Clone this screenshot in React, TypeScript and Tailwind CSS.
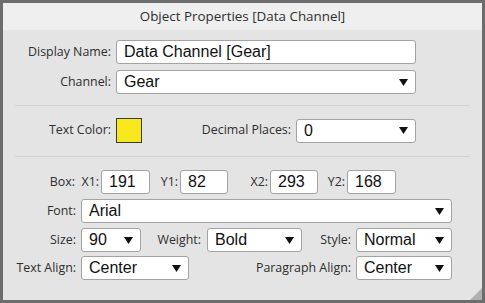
import React from "react";

const labelCls = "text-[12.4px] text-[#2e2e2e] text-right whitespace-nowrap shrink-0";
const fieldBase =
  "h-[24px] bg-white border border-[#a3a3a3] rounded-[3px] flex items-center pl-[7px] text-[16px] text-[#111] shrink-0 overflow-hidden";

function Arrow() {
  return (
    <svg width="9" height="7" viewBox="0 0 9 7" className="shrink-0">
      <polygon points="0,0 9,0 4.5,7" fill="#111" />
    </svg>
  );
}

function Field({ w, children, h }: { w: string; children: React.ReactNode; h?: string }) {
  return (
    <div className={`${fieldBase} ${w} ${h ?? ""}`} style={{ fontFamily: '"Liberation Sans", Arial, sans-serif' }}>
      <span className="leading-none">{children}</span>
    </div>
  );
}

function Select({ w, children, h }: { w: string; children: React.ReactNode; h?: string }) {
  return (
    <div
      className={`${fieldBase} ${w} ${h ?? ""} justify-between pr-[7px]`}
      style={{ fontFamily: '"Liberation Sans", Arial, sans-serif' }}
    >
      <span className="leading-none">{children}</span>
      <Arrow />
    </div>
  );
}

export default function App() {
  return (
    <div
      className="w-[485px] h-[303px] border-[3px] border-[#6d6d6d] bg-[#e4e4e4] flex flex-col relative overflow-hidden"
      style={{ fontFamily: '"Open Sans", "Noto Sans", sans-serif' }}
    >
      <div className="h-[27px] bg-[#efefef] flex items-center justify-center text-[13.4px] text-[#2e2e2e] shrink-0">
        Object Properties [Data Channel]
      </div>

      {/* Section 1 */}
      <div className="flex items-center mt-[10px]">
        <div className={`${labelCls} w-[108px]`}>Display Name:</div>
        <div className="ml-[5px]">
          <Field w="w-[300px]">Data Channel [Gear]</Field>
        </div>
      </div>
      <div className="flex items-center mt-[6px]">
        <div className={`${labelCls} w-[108px]`}>Channel:</div>
        <div className="ml-[5px]">
          <Select w="w-[300px]">Gear</Select>
        </div>
      </div>

      <div className="mt-[11px] ml-[12px] w-[455px] h-px bg-[#d2d2d2]" />

      {/* Section 2 */}
      <div className="flex items-center mt-[12px] h-[25px]">
        <div className={`${labelCls} w-[108px]`}>Text Color:</div>
        <div className="ml-[5px] w-[26px] h-[25px] bg-[#f7e81e] border border-[#3a3a3a] shrink-0" />
        <div className={`${labelCls} w-[149px]`}>Decimal Places:</div>
        <div className="ml-[5px]">
          <Select w="w-[120px]" h="h-[23px]">0</Select>
        </div>
      </div>

      <div className="mt-[13px] ml-[12px] w-[455px] h-px bg-[#d2d2d2]" />

      {/* Section 3 */}
      <div className="flex items-center mt-[13px]">
        <div className={`${labelCls} w-[72px]`}>Box:</div>
        <div className={`${labelCls} w-[24px]`}>X1:</div>
        <div className="ml-[2px]">
          <Field w="w-[49px]">191</Field>
        </div>
        <div className={`${labelCls} w-[28px]`}>Y1:</div>
        <div className="ml-[2px]">
          <Field w="w-[48px]">82</Field>
        </div>
        <div className={`${labelCls} w-[40px]`}>X2:</div>
        <div className="ml-[2px]">
          <Field w="w-[48px]">293</Field>
        </div>
        <div className={`${labelCls} w-[27px]`}>Y2:</div>
        <div className="ml-[2px]">
          <Field w="w-[49px]">168</Field>
        </div>
      </div>

      <div className="flex items-center mt-[5px]">
        <div className={`${labelCls} w-[73px]`}>Font:</div>
        <div className="ml-[5px]">
          <Select w="w-[371px]">Arial</Select>
        </div>
      </div>

      <div className="flex items-center mt-[5px]">
        <div className={`${labelCls} w-[73px]`}>Size:</div>
        <div className="ml-[5px]">
          <Select w="w-[60px]">90</Select>
        </div>
        <div className={`${labelCls} w-[60px]`}>Weight:</div>
        <div className="ml-[6px]">
          <Select w="w-[95px]">Bold</Select>
        </div>
        <div className={`${labelCls} w-[49px]`}>Style:</div>
        <div className="ml-[5px]">
          <Select w="w-[96px]">Normal</Select>
        </div>
      </div>

      <div className="flex items-center mt-[4px]">
        <div className={`${labelCls} w-[73px]`}>Text Align:</div>
        <div className="ml-[5px]">
          <Select w="w-[108px]">Center</Select>
        </div>
        <div className={`${labelCls} w-[162px]`}>Paragraph Align:</div>
        <div className="ml-[5px]">
          <Select w="w-[96px]">Center</Select>
        </div>
      </div>

      <svg width="12" height="12" viewBox="0 0 12 12" className="absolute right-0 bottom-0">
        <polygon points="12,0 12,12 0,12" fill="#b0b0b0" />
      </svg>
    </div>
  );
}
